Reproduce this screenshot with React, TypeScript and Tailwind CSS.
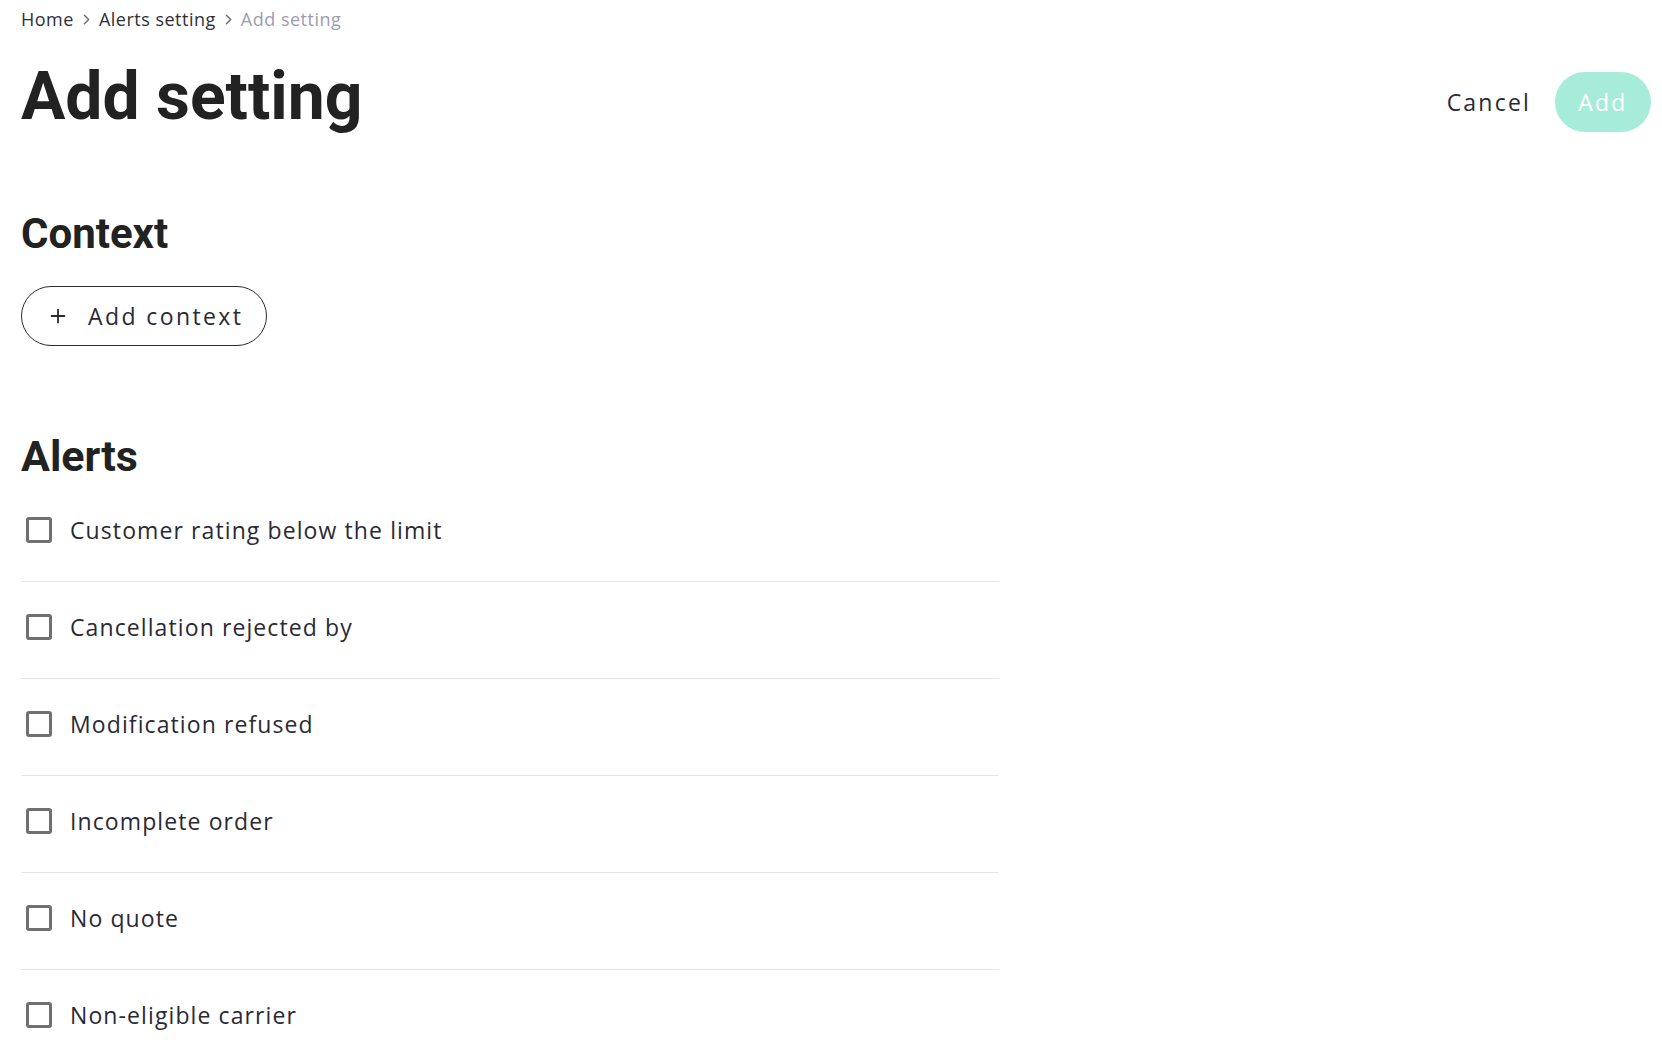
import { ChevronRight, Plus } from 'lucide-react';

const alerts = [
  'Customer rating below the limit',
  'Cancellation rejected by',
  'Modification refused',
  'Incomplete order',
  'No quote',
  'Non-eligible carrier',
];

const body = "font-['Open_Sans',sans-serif]";
const heading = "font-['Roboto',sans-serif] font-bold text-[#222222]";

export default function App() {
  return (
    <div className={`min-h-screen bg-white pl-[21px] pr-[11px] ${body} text-[#2a2a35]`}>
      {/* breadcrumb */}
      <nav className="flex items-center gap-[4px] pt-[7px] text-[18px] leading-[24px] tracking-[0.5px]">
        <span className="text-[#2f2f38]">Home</span>
        <ChevronRight size={17} strokeWidth={2} className="text-[#6b6b70]" />
        <span className="text-[#2f2f38]">Alerts setting</span>
        <ChevronRight size={17} strokeWidth={2} className="text-[#6b6b70]" />
        <span className="text-[#9d9caf]">Add setting</span>
      </nav>

      <div className="mt-[33px] flex items-start justify-between">
        <h1 className={`${heading} text-[66px] leading-none`}>Add setting</h1>
        <div className="mt-[8px] flex items-center gap-[22px]">
          <button className="h-[60px] px-[2px] text-[23px] tracking-[2.2px] text-[#2a2a35]">Cancel</button>
          <button className="h-[60px] w-[96px] rounded-full bg-[#a6ecd9] text-[23px] tracking-[2.2px] text-white">
            Add
          </button>
        </div>
      </div>

      <h2 className={`${heading} mt-[81px] text-[42px] leading-none`}>Context</h2>
      <button className="mt-[31px] flex h-[60px] w-[246px] items-center gap-[19px] rounded-full border border-[#2a2a35] pl-[25px] text-[23px] tracking-[2.4px] text-[#2a2a35]">
        <Plus size={22} strokeWidth={2} />
        <span>Add context</span>
      </button>

      <h2 className={`${heading} mt-[89px] text-[43px] leading-none`}>Alerts</h2>
      <ul className="mt-[7px] w-[978px]">
        {alerts.map((label) => (
          <li key={label} className="flex items-center gap-[18px] border-b border-[#e6e6e6] pt-[32px] pb-[38px] pl-[5px]">
            <span className="h-[26px] w-[26px] shrink-0 rounded-[3px] border-[3px] border-[#707070]" />
            <span className="text-[23px] leading-[26px] tracking-[1.1px]">{label}</span>
          </li>
        ))}
      </ul>
    </div>
  );
}
